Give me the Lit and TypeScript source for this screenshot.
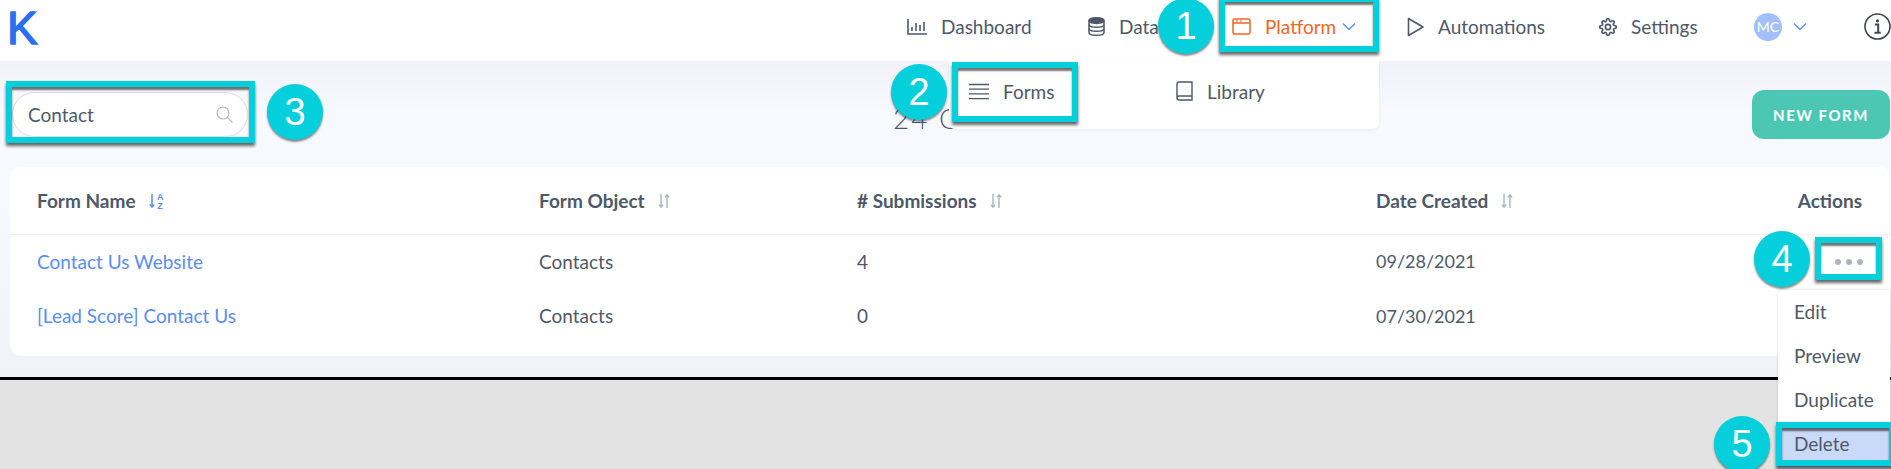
import { LitElement, html, css, svg } from 'lit';
import { customElement } from 'lit/decorators.js';

const sortIdle = svg`<svg class="sort" width="14" height="18" viewBox="0 0 14 18" fill="none" stroke="#a9b4c2" stroke-width="1.4"><path d="M4 2v13M1.8 12.6 4 15.2l2.2-2.6"/><path d="M10 16V3M7.8 5.4 10 2.8l2.2 2.6"/></svg>`;

const rows = [
  { name: 'Contact Us Website', object: 'Contacts', count: '4', date: '09/28/2021' },
  { name: '[Lead Score] Contact Us', object: 'Contacts', count: '0', date: '07/30/2021' },
];

@customElement('app-root')
export class AppRoot extends LitElement {
  static styles = css`
    :host {
      display: block;
      position: relative;
      width: 1891px;
      height: 469px;
      overflow: hidden;
      background: #e3e3e3;
      font-family: "Lato", "Open Sans", sans-serif;
      color: #4e5968;
    }

    /* top bar */
    .topbar {
      display: flex;
      align-items: center;
      height: 61px;
      background: #fff;
      padding-left: 7px;
      box-sizing: border-box;
    }
    .logo {
      font-family: "Liberation Sans", sans-serif;
      font-size: 46px;
      line-height: 54px;
      color: #2a6ff0;
      font-weight: 400;
      -webkit-text-stroke: 1.4px #2a6ff0;
      margin-top: -6px;
    }
    .nav {
      margin-left: auto;
      display: grid;
      grid-template-columns: 181px 144px 175px 192px 155px 110px 27px;
      align-items: center;
      height: 54px;
      margin-top: -8px;
    }
    .nav-item {
      display: flex;
      align-items: center;
      font-size: 19px;
      white-space: nowrap;
    }
    .nav-item .icon {
      display: flex;
      margin-right: 14px;
    }
    .nav-item.active {
      color: #f26522;
    }
    .avatar {
      width: 28px;
      height: 28px;
      border-radius: 50%;
      background: #a3bffa;
      color: #fff;
      font-size: 14px;
      display: flex;
      align-items: center;
      justify-content: center;
      margin-right: 5px;
    }
    .chev {
      margin-left: 6px;
    }

    /* page body */
    .main {
      height: 316px;
      box-sizing: border-box;
      padding: 29px 1px 0 10px;
      background: linear-gradient(180deg, #f0f2f7 0, #f8f9fe 50px, #f8f9fe 130px, #f0f2f8 316px);
    }
    .rule {
      height: 3px;
      background: #000;
    }
    .toolbar {
      display: flex;
      align-items: flex-start;
      height: 49px;
      margin-bottom: 28px;
    }
    .search {
      display: flex;
      align-items: center;
      justify-content: space-between;
      width: 236px;
      height: 45px;
      margin: 2px 0 0 2px;
      padding: 0 14px 0 15px;
      box-sizing: border-box;
      background: #fff;
      border: 1px solid #d8dce3;
      border-radius: 23px;
      font-size: 19px;
    }
    .title {
      flex: 1;
      padding-left: 645px;
      padding-top: 11px;
      font-size: 28px;
      line-height: 34px;
      letter-spacing: 2px;
      font-weight: 300;
      white-space: nowrap;
    }
    .new-form {
      width: 138px;
      height: 49px;
      border-radius: 12px;
      background: #4cc7b3;
      color: #fff;
      font-size: 15px;
      font-weight: 700;
      letter-spacing: 1.5px;
      display: flex;
      align-items: center;
      justify-content: center;
    }

    /* table */
    .card {
      height: 189px;
      box-sizing: border-box;
      background: #fff;
      border-radius: 10px;
      padding-bottom: 13px;
    }
    .row {
      display: grid;
      grid-template-columns: 502px 318px 519px 1fr;
      align-items: center;
      padding: 0 28px 0 27px;
      height: 55px;
      font-size: 19px;
    }
    .row.head {
      height: 67px;
      border-bottom: 1px solid #edf0f3;
      font-weight: 700;
      margin-bottom: -1px;
    }
    .row.first {
      height: 54px;
    }
    .cell {
      display: flex;
      align-items: center;
      gap: 12px;
      white-space: nowrap;
    }
    .link {
      color: #5b8def;
    }
    .date {
      font-size: 18px;
    }
    .spacer {
      flex: 1;
    }

    /* overlays */
    .menu {
      position: absolute;
      background: #fff;
    }
    .platform-menu {
      left: 949px;
      top: 61px;
      width: 430px;
      height: 68px;
      border-radius: 0 0 6px 6px;
      box-shadow: 0 1px 3px rgba(60, 70, 90, 0.08);
      display: grid;
      grid-template-columns: 207px 1fr;
      align-items: center;
      padding-left: 20px;
      box-sizing: border-box;
      font-size: 19px;
    }
    .menu-entry {
      display: flex;
      align-items: center;
      gap: 14px;
      margin-top: -8px;
    }
    .actions-menu {
      left: 1778px;
      top: 290px;
      width: 112px;
      height: 179px;
      box-shadow: 0 0 3px rgba(60, 70, 90, 0.2);
      border-radius: 4px 4px 0 0;
      font-size: 19px;
    }
    .actions-menu div {
      height: 44px;
      line-height: 43px;
      padding-left: 16px;
    }
    .actions-menu .selected {
      background: #c9d9f8;
      height: 47px;
    }
    .dots {
      position: absolute;
      left: 1835px;
      top: 259px;
      display: flex;
      gap: 5px;
    }
    .dots i {
      width: 6px;
      height: 6px;
      border-radius: 50%;
      background: #aab4c3;
    }
    .box {
      position: absolute;
      box-sizing: border-box;
      border: 6px solid #06cfdc;
      box-shadow: 0 3px 3px rgba(0, 0, 0, 0.6), inset 0 3px 2px rgba(0, 0, 0, 0.55);
    }
    .badge {
      position: absolute;
      width: 56px;
      height: 56px;
      margin: -28px 0 0 -28px;
      border-radius: 50%;
      background: #06cfdc;
      color: #fff;
      font-family: "Liberation Sans", sans-serif;
      font-size: 38px;
      display: flex;
      align-items: center;
      justify-content: center;
      box-shadow: 0 2px 2px rgba(0, 0, 0, 0.45);
    }
  `;

  private box(x: number, y: number, r: number, b: number) {
    return html`<div class="box" style="left:${x}px;top:${y}px;width:${r - x}px;height:${b - y}px"></div>`;
  }

  private badge(n: number, x: number, y: number) {
    return html`<div class="badge" style="left:${x}px;top:${y}px">${n}</div>`;
  }

  render() {
    const chev = (c: string) => svg`<svg class="chev" width="14" height="9" viewBox="0 0 14 9" fill="none" stroke="${c}" stroke-width="1.4"><path d="M1 1.5 7 7.5l6-6"/></svg>`;
    return html`
      <div class="topbar">
        <div class="logo">K</div>
        <div class="nav">
          <div class="nav-item">
            <span class="icon"><svg width="20" height="18" viewBox="0 0 20 18" fill="none" stroke="#4e5968" stroke-width="1.6"><path d="M1 1v15h19"/><path d="M5 13V9M9 13V5M13 13V7M17 13V4"/></svg></span>Dashboard
          </div>
          <div class="nav-item">
            <span class="icon"><svg width="17" height="19" viewBox="0 0 17 19" fill="none" stroke="#4e5968" stroke-width="1.5"><ellipse cx="8.5" cy="3.6" rx="7.5" ry="2.8" fill="#4e5968"/><path d="M1 3.6v11.8c0 1.6 3.4 2.8 7.5 2.8s7.5-1.2 7.5-2.8V3.6"/><path d="M1 7.500c0 1.600 3.400 2.800 7.500 2.800S16 9.100 16 7.500M1 11.500c0 1.600 3.400 2.800 7.500 2.800s7.500-1.200 7.500-2.800"/></svg></span>Data
          </div>
          <div class="nav-item active">
            <span class="icon"><svg width="19" height="17" viewBox="0 0 19 17" fill="none" stroke="#f26522" stroke-width="1.5"><rect x="1" y="1" width="17" height="15" rx="1.500"/><path d="M1 5h17"/><path d="M4 3h2M8 3h2" stroke-width="1"/></svg></span>Platform${chev('#5b8def')}
          </div>
          <div class="nav-item">
            <span class="icon"><svg width="17" height="20" viewBox="0 0 17 20" fill="none" stroke="#4e5968" stroke-width="1.600" stroke-linejoin="round"><path d="M1.500 1.500v17L16 10z"/></svg></span>Automations
          </div>
          <div class="nav-item">
            <span class="icon"><svg width="18" height="18" viewBox="0 0 24 24" fill="none" stroke="#4e5968" stroke-width="2.200" stroke-linejoin="round"><circle cx="12" cy="12" r="3.500"/><path d="M19.400 15a1.650 1.650 0 0 0 .33 1.820l.06.06a2 2 0 1 1-2.830 2.830l-.06-.06a1.650 1.650 0 0 0-2.820 1.170V21a2 2 0 1 1-4 0v-.09A1.650 1.650 0 0 0 7.270 19.740l-.06.06a2 2 0 1 1-2.830-2.830l.06-.06A1.650 1.650 0 0 0 3.270 14H3a2 2 0 1 1 0-4h.09A1.650 1.650 0 0 0 4.600 7.270l-.06-.06a2 2 0 1 1 2.830-2.830l.06.06A1.650 1.650 0 0 0 10 3.270V3a2 2 0 1 1 4 0v.09a1.650 1.650 0 0 0 2.820 1.170l.06-.06a2 2 0 1 1 2.830 2.830l-.06.06A1.650 1.650 0 0 0 20.910 10H21a2 2 0 1 1 0 4h-.09a1.650 1.650 0 0 0-1.510 1z"/></svg></span>Settings
          </div>
          <div class="nav-item">
            <span class="avatar">MC</span>${chev('#5b8def')}
          </div>
          <div class="nav-item">
            <svg width="27" height="27" viewBox="0 0 27 27" fill="none" stroke="#3d4550" stroke-width="1.600"><circle cx="13.500" cy="13.500" r="12.500"/><circle cx="13.500" cy="7.800" r="1.600" fill="#3d4550" stroke="none"/><path d="M10.800 11.500h3.400v8M10.500 19.800h6.200" stroke-width="2"/></svg>
          </div>
        </div>
      </div>

      <div class="main">
        <div class="toolbar">
          <div class="search">
            Contact
            <svg width="17" height="17" viewBox="0 0 17 17" fill="none" stroke="#b4bbc6" stroke-width="1.200"><circle cx="7" cy="7" r="6"/><path d="m11.500 11.500 5 5"/></svg>
          </div>
          <div class="title">24 C</div>
          <div class="new-form">NEW FORM</div>
        </div>
        <div class="card">
          <div class="row head">
            <div class="cell">Form Name
              <svg class="sort" width="17" height="18" viewBox="0 0 17 18" fill="none"><path d="M4 2v13M1.800 12.600 4 15.200l2.200-2.600" stroke="#5b8def" stroke-width="1.500"/><text x="9" y="8" font-size="9" font-weight="700" fill="#5b8def" font-family="Liberation Sans">A</text><text x="9.300" y="17" font-size="9" font-weight="700" fill="#5b8def" font-family="Liberation Sans">Z</text></svg>
            </div>
            <div class="cell">Form Object ${sortIdle}</div>
            <div class="cell"># Submissions ${sortIdle}</div>
            <div class="cell">Date Created ${sortIdle}<span class="spacer"></span>Actions</div>
          </div>
          ${rows.map((r, i) => html`
            <div class="row ${i === 0 ? 'first' : ''}">
              <div class="cell link">${r.name}</div>
              <div class="cell">${r.object}</div>
              <div class="cell">${r.count}</div>
              <div class="cell date">${r.date}</div>
            </div>`)}
        </div>
      </div>
      <div class="rule"></div>

      <div class="menu platform-menu">
        <div class="menu-entry">
          <svg width="20" height="17" viewBox="0 0 20 17" stroke="#4e5968" stroke-width="1.300"><path d="M0 1.500h20M0 6.200h20M0 10.900h20M0 15.600h20"/></svg>
          Forms
        </div>
        <div class="menu-entry">
          <svg width="17" height="20" viewBox="0 0 17 20" fill="none" stroke="#4e5968" stroke-width="1.400"><path d="M1 16V3a2 2 0 0 1 2-2h13v14H3a2 2 0 0 0-2 2 2 2 0 0 0 2 2h13v-4"/></svg>
          Library
        </div>
      </div>

      <div class="menu actions-menu">
        <div>Edit</div>
        <div>Preview</div>
        <div>Duplicate</div>
        <div class="selected">Delete</div>
      </div>
      <div class="dots"><i></i><i></i><i></i></div>

      ${this.box(1219, -4, 1379, 52)}
      ${this.box(952, 62, 1078, 122)}
      ${this.box(6, 81, 255, 143)}
      ${this.box(1815, 237, 1882, 280)}
      ${this.box(1776, 422, 1895, 466)}
      ${this.badge(1, 1186, 26)}
      ${this.badge(2, 919, 92)}
      ${this.badge(3, 295, 112)}
      ${this.badge(4, 1782, 259)}
      ${this.badge(5, 1742, 444)}
    `;
  }
}
